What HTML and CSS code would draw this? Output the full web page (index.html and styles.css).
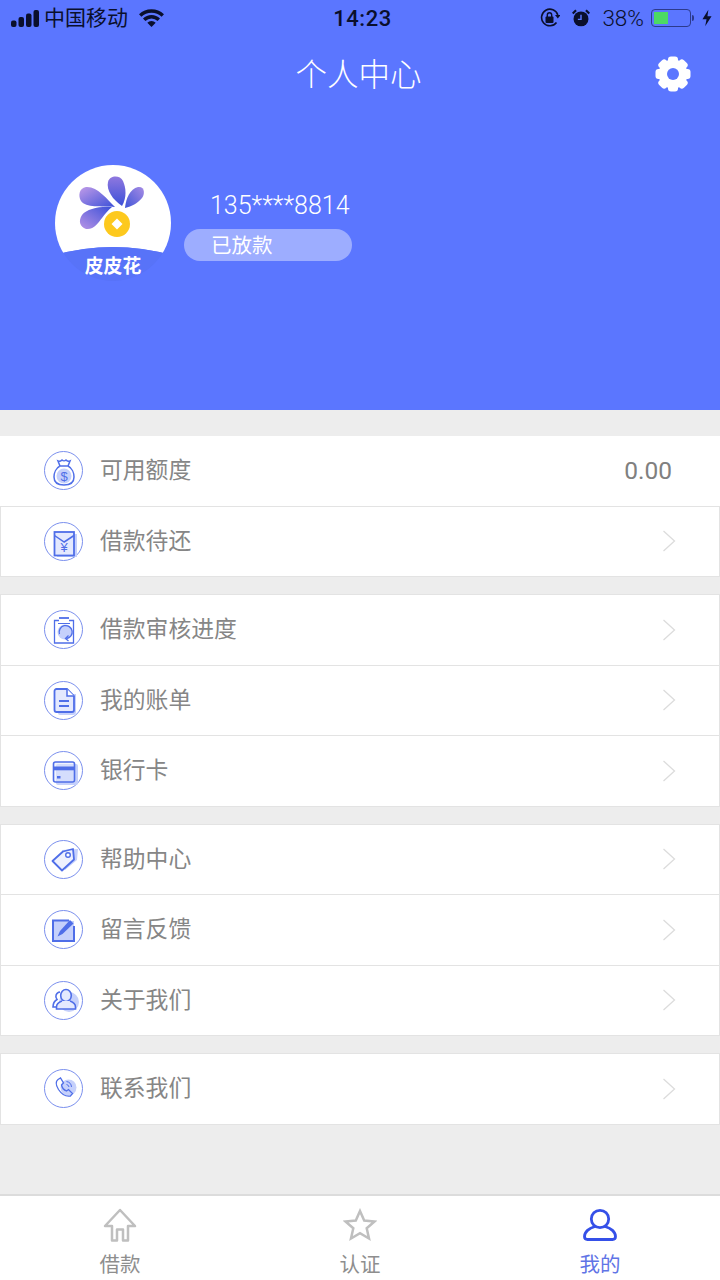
FILE: index.html
```html
<!DOCTYPE html>
<html lang="zh-CN">
<head>
    <meta charset="UTF-8">
    <meta name="viewport" content="width=device-width, initial-scale=1.0">
    <title>个人中心</title>
    <link rel="stylesheet" href="styles.css">
</head>
<body>
<div class="page">
    <header class="hero">
        <div class="statusBar">
            <div class="statusLeft">
                <svg class="signal" width="28" height="17" viewBox="0 0 28 17"><rect x="0" y="10.500" width="5.500" height="6.500" rx="2"/><rect x="7.500" y="7" width="5.500" height="10" rx="2"/><rect x="15" y="3.500" width="5.500" height="13.500" rx="2"/><rect x="22.500" y="0" width="5.500" height="17" rx="2"/></svg>
                <span class="carrier">中国移动</span>
                <svg class="wifi" width="25" height="18" viewBox="0 0 25 18"><path d="M1.200 6.500a16.300 16.300 0 0 1 22.600 0" fill="none" stroke="#0a0f2c" stroke-width="3.400"/><path d="M5.200 10.800a10.300 10.300 0 0 1 14.600 0" fill="none" stroke="#0a0f2c" stroke-width="3.400"/><path d="M12.500 18l-4.200-4.200a6 6 0 0 1 8.400 0z" fill="#0a0f2c"/></svg>
            </div>
            <span class="clock">14:23</span>
            <div class="statusRight">
                <svg width="20" height="20" viewBox="0 0 20 20"><path d="M16.500 14.500A8.300 8.300 0 1 1 17.800 7" fill="none" stroke="#0a0f2c" stroke-width="1.600"/><path d="M15 7h5.500l-2.700 3.500z" fill="#0a0f2c"/><rect x="5.500" y="8.500" width="8" height="6.500" rx="1" fill="#0a0f2c"/><path d="M7.300 9V7a2.200 2.200 0 0 1 4.400 0v2" fill="none" stroke="#0a0f2c" stroke-width="1.400"/></svg>
                <svg class="alarm" width="18" height="18" viewBox="0 0 20 20"><circle cx="10" cy="11" r="8.300" fill="#0a0f2c"/><path d="M10 6.500V11.500H6.500" fill="none" stroke="#5b76ff" stroke-width="1.600"/><path d="M0.800 5L4.500 1.300M19.200 5L15.500 1.300" stroke="#0a0f2c" stroke-width="2.400"/></svg>
                <span class="percent">38%</span>
                <div class="battery"><div class="batteryFill"></div></div>
                <span class="batteryTip"></span>
                <svg class="bolt" width="10" height="18" viewBox="0 0 11 18"><path d="M7 0L0.500 10.500H5L3.500 18L10.500 7H6z" fill="#0a0f2c"/></svg>
            </div>
        </div>

        <div class="navBar">
            <h1 class="navTitle">个人中心</h1>
            <svg class="gear" width="36" height="36" viewBox="0 0 36 36">
                <g fill="#fff">
                    <circle cx="18" cy="18" r="14.500"/>
                    <rect x="13" y="0.500" width="10" height="35" rx="3"/>
                    <rect x="13" y="0.500" width="10" height="35" rx="3" transform="rotate(45 18 18)"/>
                    <rect x="13" y="0.500" width="10" height="35" rx="3" transform="rotate(90 18 18)"/>
                    <rect x="13" y="0.500" width="10" height="35" rx="3" transform="rotate(135 18 18)"/>
                </g>
                <circle cx="18" cy="18" r="6" fill="#5b76ff"/>
            </svg>
        </div>

        <div class="profile">
            <div class="avatar">
                <svg width="116" height="116" viewBox="0 0 116 116">
                    <defs>
                        <linearGradient id="petalA" x1="0" y1="0" x2="1" y2="1"><stop offset="0" stop-color="#c09be8"/><stop offset="1" stop-color="#3c50d8"/></linearGradient>
                        <linearGradient id="petalB" x1="1" y1="0" x2="0" y2="1"><stop offset="0" stop-color="#3c50d8"/><stop offset="1" stop-color="#b794e6"/></linearGradient>
                        <linearGradient id="petalC" x1="1" y1="0" x2="0" y2="1"><stop offset="0" stop-color="#a68be4"/><stop offset="1" stop-color="#3f55d8"/></linearGradient>
                        <linearGradient id="petalD" x1="0" y1="0" x2="0" y2="1"><stop offset="0" stop-color="#8f78df"/><stop offset="1" stop-color="#3c50d8"/></linearGradient>
                        <clipPath id="avatarTop"><path d="M0 0H116V90Q58 74 0 90z"/></clipPath>
                        <clipPath id="avatarBand"><path d="M0 90Q58 74 116 90V116H0z"/></clipPath>
                    </defs>
                    <circle cx="58" cy="58" r="58" fill="#fff" clip-path="url(#avatarTop)"/>
                    <circle cx="58" cy="58" r="58" fill="#5873f8" clip-path="url(#avatarBand)"/>
                    <path d="M60 42C52 34 42 21 31 22C24 23 23 31 26 36C31 43 46 41 60 42Z" fill="url(#petalA)"/>
                    <path d="M67 41C58 35 51 25 53 17C55 10 65 10 68 16C71 23 72 32 67 41Z" fill="url(#petalD)"/>
                    <path d="M70 43C71 33 75 24 83 22C90 21 90 29 87 33C82 39 77 41 70 43Z" fill="url(#petalC)"/>
                    <path d="M57 42C44 41 32 44 27 50C23 56 25 62 31 64C39 65 43 58 47 53C50 49 53 45 57 42Z" fill="url(#petalB)"/>
                    <circle cx="62" cy="59" r="13" fill="#fdc91e"/>
                    <path d="M62 53.500L67.500 59L62 64.500L56.500 59z" fill="#fff"/>
                </svg>
                <span class="avatarName">皮皮花</span>
            </div>
            <div class="profileInfo">
                <div class="phone">135****8814</div>
                <div class="statusPill">已放款</div>
            </div>
        </div>
    </header>

    <main class="menu">
        <section class="group groupFirst">
            <div class="row rowPlain">
                <span class="rowIcon"><svg width="38" height="38" viewBox="0 0 38 38"><circle cx="19" cy="24" r="7.500" fill="#c5d0fb"/><path d="M15 14L13 9c2 1 3 0 4-1 1 1 3 1 4 0 1 1 2 2 4 1L23 14M15 14h8M15 14C11 16 9 21 9 25 9 31 13 33 19 33S29 31 29 25C29 21 27 16 23 14" fill="none" stroke="#4f6ee8" stroke-width="1.500"/><text x="19" y="28.500" class="iconGlyph">$</text></svg></span>
                <span class="rowLabel">可用额度</span>
                <span class="rowValue">0.00</span>
            </div>
            <div class="row rowBoxed">
                <span class="rowIcon"><svg width="38" height="38" viewBox="0 0 38 38"><rect x="12" y="12" width="20" height="23" fill="#c5d0fb"/><rect x="9.500" y="10" width="19.500" height="23.500" fill="#e4e9fe" stroke="#4f6ee8" stroke-width="1.800"/><path d="M9.500 13.500l9.700 6.500 9.800-6.500" fill="none" stroke="#4f6ee8" stroke-width="1.500"/><text x="19.200" y="30" class="iconGlyph">¥</text></svg></span>
                <span class="rowLabel">借款待还</span>
                <svg class="chevron" width="14" height="22" viewBox="0 0 14 22"><path d="M1.500 1L12.500 11L1.500 21" fill="none" stroke="#dcdcdc" stroke-width="1.300"/></svg>
            </div>
        </section>

        <section class="group">
            <div class="row">
                <span class="rowIcon"><svg width="38" height="38" viewBox="0 0 38 38"><circle cx="20" cy="21" r="7.500" fill="#c5d0fb"/><path d="M14 9.500H9.500V32H28.500V9.500H24" fill="none" stroke="#4f6ee8" stroke-width="1.300"/><path d="M14 7h10" stroke="#4f6ee8" stroke-width="1.800"/><path d="M13 12.500h12" stroke="#4f6ee8" stroke-width="1"/><path d="M14.500 23a6.500 6.500 0 1 1 7 4.500" fill="none" stroke="#4f6ee8" stroke-width="1.300"/><path d="M23.500 24.500l-3 3 3 2.500" fill="none" stroke="#4f6ee8" stroke-width="1.300"/></svg></span>
                <span class="rowLabel">借款审核进度</span>
                <svg class="chevron" width="14" height="22" viewBox="0 0 14 22"><path d="M1.500 1L12.500 11L1.500 21" fill="none" stroke="#dcdcdc" stroke-width="1.300"/></svg>
            </div>
            <div class="row">
                <span class="rowIcon"><svg width="38" height="38" viewBox="0 0 38 38"><path d="M13 13h18v18a3 3 0 0 1-3 3H15a2 2 0 0 1-2-2z" fill="#c5d0fb"/><path d="M11.500 8H22l7 7V29a2 2 0 0 1-2 2H11.500a2 2 0 0 1-2-2V10a2 2 0 0 1 2-2z" fill="#e4e9fe" stroke="#4f6ee8" stroke-width="1.800"/><path d="M22 8v7h7" fill="#fff" stroke="#4f6ee8" stroke-width="1.500"/><path d="M14 20h10M14 25h10" stroke="#4f6ee8" stroke-width="1.800"/></svg></span>
                <span class="rowLabel">我的账单</span>
                <svg class="chevron" width="14" height="22" viewBox="0 0 14 22"><path d="M1.500 1L12.500 11L1.500 21" fill="none" stroke="#dcdcdc" stroke-width="1.300"/></svg>
            </div>
            <div class="row">
                <span class="rowIcon"><svg width="38" height="38" viewBox="0 0 38 38"><rect x="11" y="12" width="22" height="21" rx="2" fill="#c5d0fb"/><rect x="8.500" y="10" width="21" height="20" rx="2" fill="#e4e9fe" fill-opacity=".5" stroke="#4f6ee8" stroke-width="1.600"/><rect x="8.500" y="14.500" width="21" height="3.800" fill="#4f6ee8"/><rect x="12" y="24" width="3.500" height="2.500" fill="#4f6ee8"/></svg></span>
                <span class="rowLabel">银行卡</span>
                <svg class="chevron" width="14" height="22" viewBox="0 0 14 22"><path d="M1.500 1L12.500 11L1.500 21" fill="none" stroke="#dcdcdc" stroke-width="1.300"/></svg>
            </div>
        </section>

        <section class="group">
            <div class="row">
                <span class="rowIcon"><svg width="38" height="38" viewBox="0 0 38 38"><path d="M17 10L33 9 32 20 20 30z" fill="#c5d0fb"/><path d="M18 11.500L28 9 29 19.500 17 30.500 7.500 21z" fill="#eef1fe" stroke="#4f6ee8" stroke-width="1.800" stroke-linejoin="round"/><circle cx="23" cy="15" r="2.300" fill="#fff" stroke="#4f6ee8" stroke-width="1.400"/></svg></span>
                <span class="rowLabel">帮助中心</span>
                <svg class="chevron" width="14" height="22" viewBox="0 0 14 22"><path d="M1.500 1L12.500 11L1.500 21" fill="none" stroke="#dcdcdc" stroke-width="1.300"/></svg>
            </div>
            <div class="row">
                <span class="rowIcon"><svg width="38" height="38" viewBox="0 0 38 38"><rect x="9" y="10" width="20" height="20" fill="#c5d0fb"/><path d="M24 9.500H8V30H29V15" fill="none" stroke="#4f6ee8" stroke-width="2"/><path d="M12.500 25.500l2.500-5.500 10-11 3.500 3.500-11 10.500z" fill="#4f6ee8"/></svg></span>
                <span class="rowLabel">留言反馈</span>
                <svg class="chevron" width="14" height="22" viewBox="0 0 14 22"><path d="M1.500 1L12.500 11L1.500 21" fill="none" stroke="#dcdcdc" stroke-width="1.300"/></svg>
            </div>
            <div class="row">
                <span class="rowIcon"><svg width="38" height="38" viewBox="0 0 38 38"><circle cx="24" cy="21" r="10" fill="#c5d0fb"/><path d="M15 11a4.500 4.500 0 0 0-3 7.500c-2.500 1.500-4 3.500-4 7.500h3.500" fill="none" stroke="#4f6ee8" stroke-width="1.600"/><ellipse cx="21" cy="14.500" rx="5.300" ry="6" fill="#e4e9fe" stroke="#4f6ee8" stroke-width="1.600"/><path d="M17 20c-3 1-5.500 2.500-5.500 6v2h19V26c0-3.500-2.500-5-5.500-6" fill="#e4e9fe" stroke="#4f6ee8" stroke-width="1.600"/></svg></span>
                <span class="rowLabel">关于我们</span>
                <svg class="chevron" width="14" height="22" viewBox="0 0 14 22"><path d="M1.500 1L12.500 11L1.500 21" fill="none" stroke="#dcdcdc" stroke-width="1.300"/></svg>
            </div>
        </section>

        <section class="group">
            <div class="row">
                <span class="rowIcon"><svg width="38" height="38" viewBox="0 0 38 38"><circle cx="23.500" cy="17.500" r="8" fill="#c5d0fb"/><path d="M13 9.500l2.500-1.500 3 5-2 2c.5 2.500 2.500 5 5 6l2-1.500 4 4-2 2.500c-5 1-9-2-12-6.500-2.500-4-3-8-.5-10z" fill="none" stroke="#4f6ee8" stroke-width="1.300"/><path d="M21.500 11.500a6 6 0 0 1 5 5.500M21.500 14.500a3 3 0 0 1 2.500 2.500" fill="none" stroke="#4f6ee8" stroke-width="1"/></svg></span>
                <span class="rowLabel">联系我们</span>
                <svg class="chevron" width="14" height="22" viewBox="0 0 14 22"><path d="M1.500 1L12.500 11L1.500 21" fill="none" stroke="#dcdcdc" stroke-width="1.300"/></svg>
            </div>
        </section>
    </main>

    <nav class="tabBar">
        <div class="tab">
            <svg width="34" height="34" viewBox="0 0 34 34"><path d="M9 18H2L17 2 32 18H25V32.500H20V21.500H14V32.500H9z" fill="none" stroke="#bfbfbf" stroke-width="2.500" stroke-linejoin="round"/></svg>
            <span class="tabLabel">借款</span>
        </div>
        <div class="tab">
            <svg width="34" height="34" viewBox="0 0 34 34"><path d="M17 3l4.200 9.500 10.300 1-7.800 6.800 2.300 10.200L17 25.200 8 30.500l2.300-10.200L2.500 13.500l10.300-1z" fill="none" stroke="#bfbfbf" stroke-width="2.500"/></svg>
            <span class="tabLabel">认证</span>
        </div>
        <div class="tab tabActive">
            <svg width="34" height="34" viewBox="0 0 34 34"><circle cx="17" cy="11" r="8.700" fill="none" stroke="#3550e8" stroke-width="2.800"/><path d="M12 18.500C6 20 1.500 24 1.500 28.500c0 2 1 3 3 3h25c2 0 3-1 3-3 0-4.500-4.500-8.500-10.500-10" fill="none" stroke="#3550e8" stroke-width="2.800"/></svg>
            <span class="tabLabel">我的</span>
        </div>
    </nav>
</div>
</body>
</html>
```

FILE: styles.css
```css
* {
    box-sizing: border-box;
}

body {
    margin: 0;
    background-color: #ededed;
    font-family: "Noto Sans CJK SC", "Liberation Sans", sans-serif;
}

.page {
    width: 720px;
    height: 1280px;
    display: flex;
    flex-direction: column;
    overflow: hidden;
}

/* top blue area */
.hero {
    height: 410px;
    background-color: #5b76ff;
    flex-shrink: 0;
}

.statusBar {
    height: 36px;
    padding: 0 8px 0 11px;
    display: flex;
    align-items: center;
    justify-content: space-between;
    color: #0a0f2c;
}

.statusLeft {
    display: flex;
    align-items: center;
    width: 250px;
}

.signal {
    fill: #0a0f2c;
    margin-right: 5px;
}

.carrier {
    font-size: 21px;
    line-height: 1;
    margin-bottom: 3px;
}

.wifi {
    margin-left: 11px;
}

.clock {
    margin-left: 2px;
    font-family: Roboto, "Liberation Sans", sans-serif;
    font-size: 22px;
    font-weight: 500;
    letter-spacing: 0.5px;
}

.statusRight {
    display: flex;
    align-items: center;
    width: 250px;
    justify-content: flex-end;
}

.alarm {
    margin-left: 12px;
}

.percent {
    font-family: Roboto, "Liberation Sans", sans-serif;
    font-size: 22.500px;
    font-weight: 300;
    margin-left: 12px;
    margin-right: 7px;
}

.battery {
    width: 40px;
    height: 18px;
    border: 1.500px solid #2c3a8c;
    border-radius: 4px;
    padding: 2px;
}

.batteryFill {
    width: 14px;
    height: 100%;
    background-color: #4cd964;
}

.batteryTip {
    width: 2px;
    height: 6px;
    margin-left: 1px;
    background-color: #2c3a8c;
    border-radius: 0 2px 2px 0;
}

.bolt {
    margin-left: 8px;
}

.navBar {
    position: relative;
    height: 76px;
    display: flex;
    align-items: center;
    justify-content: center;
}

.navTitle {
    margin: 0 3px 0 0;
    font-size: 31.500px;
    line-height: 1;
    font-weight: 300;
    color: #ffffff;
    padding-bottom: 2px;
}

.gear {
    position: absolute;
    right: 29px;
    top: 20px;
}

.profile {
    margin-top: 53px;
    padding-left: 55px;
    display: flex;
    align-items: flex-start;
}

.avatar {
    position: relative;
    width: 116px;
    height: 116px;
    flex-shrink: 0;
}

.avatarName {
    position: absolute;
    left: 0;
    right: 0;
    bottom: 1px;
    line-height: 30px;
    text-align: center;
    font-size: 18.800px;
    font-weight: bold;
    color: #ffffff;
}

.profileInfo {
    margin: 24px 0 0 13px;
}

.phone {
    padding-left: 26px;
    font-family: Roboto, "Liberation Sans", sans-serif;
    font-size: 25px;
    font-weight: 300;
    line-height: 34px;
    color: #ffffff;
}

.statusPill {
    width: 168px;
    height: 32px;
    margin-top: 6px;
    padding-left: 27px;
    border-radius: 16px;
    background-color: #9dadff;
    font-size: 20.500px;
    line-height: 30px;
    color: #ffffff;
}

/* list */
.menu {
    flex: 1;
    padding-top: 26px;
    display: flex;
    flex-direction: column;
    gap: 17px;
}

.group {
    background-color: #ffffff;
    border: 1px solid #e3e3e3;
    border-top: none;
}

.groupFirst {
    border: none;
}

.row {
    height: 70.500px;
    display: flex;
    align-items: center;
    padding: 0 43px;
    border-top: 1px solid #e3e3e3;
}

.rowPlain {
    height: 69.500px;
    padding: 0 44px;
    border-top: none;
}

.rowBoxed {
    height: 71.500px;
    border: 1px solid #e3e3e3;
}

.rowIcon {
    width: 39px;
    height: 39px;
    flex-shrink: 0;
    border: 1.300px solid #7b90ee;
    border-radius: 50%;
    display: flex;
    align-items: center;
    justify-content: center;
}

.rowIcon svg {
    flex-shrink: 0;
}

.iconGlyph {
    font-family: "Liberation Sans", sans-serif;
    font-size: 13px;
    text-anchor: middle;
    fill: #4f6ee8;
}

.rowLabel {
    margin-left: 17px;
    margin-bottom: 2px;
    flex: 1;
    font-size: 22.800px;
    line-height: 1;
    font-weight: 400;
    color: #868686;
}

.rowValue {
    font-family: Roboto, "Liberation Sans", sans-serif;
    font-size: 24.500px;
    color: #808080;
    margin-right: 4px;
}

.chevron {
    margin-right: 0;
}

/* bottom tabs */
.tabBar {
    height: 86px;
    flex-shrink: 0;
    background-color: #ffffff;
    border-top: 2px solid #dcdcdc;
    display: grid;
    grid-template-columns: repeat(3, 1fr);
}

.tab {
    display: flex;
    flex-direction: column;
    align-items: center;
    padding-top: 12px;
}

.tabLabel {
    margin-top: 7px;
    font-size: 20.500px;
    line-height: 28px;
    color: #8e8e8e;
}

.tabActive .tabLabel {
    color: #5f74e6;
}
```
